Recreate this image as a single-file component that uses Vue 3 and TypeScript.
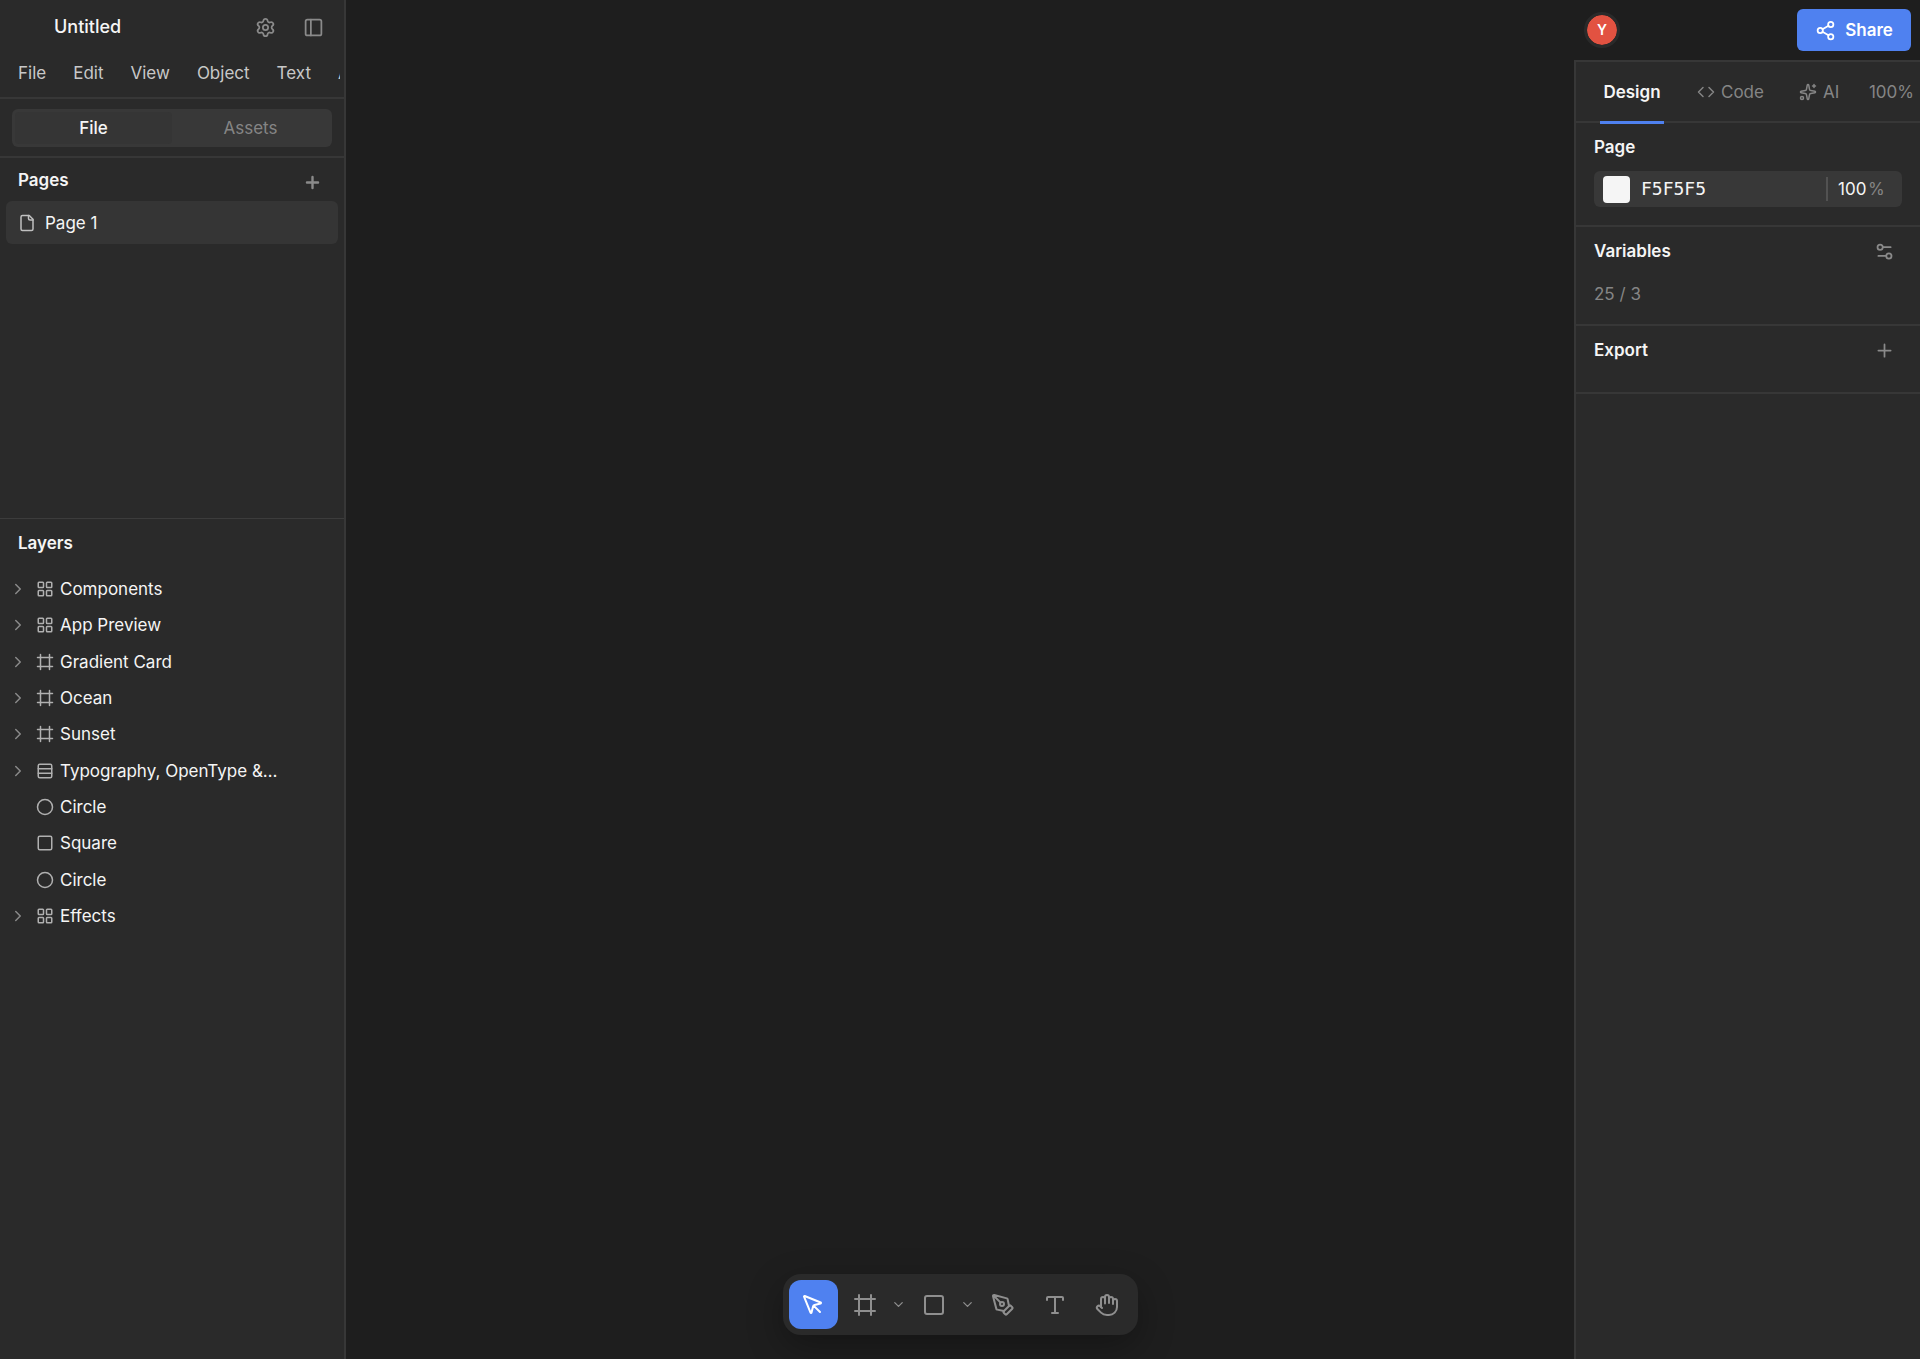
<script setup lang="ts">
import { ref } from 'vue'

type IconName = keyof typeof icons

const icons = {
  settings:
    '<path d="M9.671 4.136a2.34 2.34 0 0 1 4.659 0 2.34 2.34 0 0 0 3.319 1.915 2.34 2.34 0 0 1 2.33 4.033 2.34 2.34 0 0 0 0 3.831 2.34 2.34 0 0 1-2.33 4.033 2.34 2.34 0 0 0-3.319 1.915 2.34 2.34 0 0 1-4.659 0 2.34 2.34 0 0 0-3.32-1.915 2.34 2.34 0 0 1-2.33-4.033 2.34 2.34 0 0 0 0-3.831A2.34 2.34 0 0 1 6.35 6.051a2.34 2.34 0 0 0 3.319-1.915"/><circle cx="12" cy="12" r="3"/>',
  panel: '<rect x="3" y="3" width="18" height="18" rx="2"/><path d="M9 3v18"/>',
  plus: '<path d="M5 12h14M12 5v14"/>',
  file: '<path d="M15 2H6a2 2 0 0 0-2 2v16a2 2 0 0 0 2 2h12a2 2 0 0 0 2-2V7Z"/><path d="M14 2v4a2 2 0 0 0 2 2h4"/>',
  right: '<path d="m9 18 6-6-6-6"/>',
  down: '<path d="m6 9 6 6 6-6"/>',
  group:
    '<rect x="3" y="3" width="7" height="7" rx="1"/><rect x="14" y="3" width="7" height="7" rx="1"/><rect x="14" y="14" width="7" height="7" rx="1"/><rect x="3" y="14" width="7" height="7" rx="1"/>',
  frame: '<path d="M22 6H2M22 18H2M6 2v20M18 2v20"/>',
  rows: '<rect x="3" y="3" width="18" height="18" rx="2"/><path d="M21 9H3M21 15H3"/>',
  circle: '<circle cx="12" cy="12" r="10"/>',
  square: '<rect x="3" y="3" width="18" height="18" rx="2"/>',
  share:
    '<circle cx="18" cy="5" r="3"/><circle cx="6" cy="12" r="3"/><circle cx="18" cy="19" r="3"/><path d="m8.59 13.51 6.83 3.98M15.41 6.51l-6.82 3.98"/>',
  code: '<path d="m16 18 6-6-6-6M8 6l-6 6 6 6"/>',
  sparkles:
    '<path d="M11.017 2.814a1 1 0 0 1 1.966 0l1.051 5.558a2 2 0 0 0 1.594 1.594l5.558 1.051a1 1 0 0 1 0 1.966l-5.558 1.051a2 2 0 0 0-1.594 1.594l-1.051 5.558a1 1 0 0 1-1.966 0l-1.051-5.558a2 2 0 0 0-1.594-1.594l-5.558-1.051a1 1 0 0 1 0-1.966l5.558-1.051a2 2 0 0 0 1.594-1.594zM20 2v4M22 4h-4"/><circle cx="4" cy="20" r="2"/>',
  sliders: '<path d="M14 17H5M19 7h-9"/><circle cx="17" cy="17" r="3"/><circle cx="7" cy="7" r="3"/>',
  pointer:
    '<path d="M12.586 12.586 19 19M3.688 3.037a.497.497 0 0 0-.651.651l6.5 15.999a.501.501 0 0 0 .947-.062l1.569-6.083a2 2 0 0 1 1.448-1.479l6.124-1.579a.5.5 0 0 0 .063-.947z"/>',
  pen: '<path d="M15.707 21.293a1 1 0 0 1-1.414 0l-1.586-1.586a1 1 0 0 1 0-1.414l5.586-5.586a1 1 0 0 1 1.414 0l1.586 1.586a1 1 0 0 1 0 1.414z"/><path d="m18 13-1.375-6.874a1 1 0 0 0-.746-.776L3.235 2.028a1 1 0 0 0-1.207 1.207L5.35 15.879a1 1 0 0 0 .776.746L13 18M2.3 2.3l7.286 7.286"/><circle cx="11" cy="11" r="2"/>',
  type: '<path d="M12 4v16M4 7V5a1 1 0 0 1 1-1h14a1 1 0 0 1 1 1v2M9 20h6"/>',
  hand: '<path d="M18 11V6a2 2 0 0 0-2-2a2 2 0 0 0-2 2M14 10V4a2 2 0 0 0-2-2a2 2 0 0 0-2 2v2M10 10.5V6a2 2 0 0 0-2-2a2 2 0 0 0-2 2v8"/><path d="M18 8a2 2 0 1 1 4 0v6a8 8 0 0 1-8 8h-2c-2.8 0-4.5-.86-5.99-2.34l-3.6-3.6a2 2 0 0 1 2.83-2.82L7 15"/>',
}

const menus = ['File', 'Edit', 'View', 'Object', 'Text', 'Arrange']

const layers: { name: string; icon: IconName; open?: boolean }[] = [
  { name: 'Components', icon: 'group', open: true },
  { name: 'App Preview', icon: 'group', open: true },
  { name: 'Gradient Card', icon: 'frame', open: true },
  { name: 'Ocean', icon: 'frame', open: true },
  { name: 'Sunset', icon: 'frame', open: true },
  { name: 'Typography, OpenType &…', icon: 'rows', open: true },
  { name: 'Circle', icon: 'circle' },
  { name: 'Square', icon: 'square' },
  { name: 'Circle', icon: 'circle' },
  { name: 'Effects', icon: 'group', open: true },
]

const tools: { label: string; icon: IconName; more?: boolean }[] = [
  { label: 'Move', icon: 'pointer' },
  { label: 'Frame', icon: 'frame', more: true },
  { label: 'Rectangle', icon: 'square', more: true },
  { label: 'Pen', icon: 'pen' },
  { label: 'Type', icon: 'type' },
  { label: 'Pan', icon: 'hand' },
]

const activeTool = ref('Move')
const pageColor = ref('F5F5F5')
const pageOpacity = ref('100')
</script>

<template>
  <div class="editor">
    <aside class="left">
      <header class="title-bar">
        <h1>Untitled</h1>
        <button class="icon-btn" aria-label="Settings"><svg class="ic md" viewBox="0 0 24 24" v-html="icons.settings" /></button>
        <button class="icon-btn" aria-label="Toggle sidebar"><svg class="ic md" viewBox="0 0 24 24" v-html="icons.panel" /></button>
      </header>
      <nav class="menus">
        <button v-for="m in menus" :key="m">{{ m }}</button>
      </nav>
      <div class="switch-wrap">
        <div class="switch">
          <button class="on">File</button>
          <button>Assets</button>
        </div>
      </div>
      <section class="pages">
        <div class="pages-head">
          <h2>Pages</h2>
          <button class="icon-btn" aria-label="Add page"><svg class="ic add" viewBox="0 0 24 24" v-html="icons.plus" /></button>
        </div>
        <button class="page"><svg class="ic sm" viewBox="0 0 24 24" v-html="icons.file" />Page 1</button>
      </section>
      <section class="layers">
        <h2>Layers</h2>
        <ul>
          <li v-for="(l, i) in layers" :key="i">
            <svg class="ic sm arrow" viewBox="0 0 24 24" v-html="l.open ? icons.right : ''" />
            <svg class="ic sm kind" viewBox="0 0 24 24" v-html="icons[l.icon]" />
            <span>{{ l.name }}</span>
          </li>
        </ul>
      </section>
    </aside>

    <main class="canvas">
      <div class="toolbar">
        <template v-for="t in tools" :key="t.label">
          <button class="tool" :class="{ active: activeTool === t.label }" :aria-label="t.label" @click="activeTool = t.label">
            <svg class="ic lg" viewBox="0 0 24 24" v-html="icons[t.icon]" />
          </button>
          <button v-if="t.more" class="more" :aria-label="`${t.label} options`">
            <svg class="ic xs" viewBox="0 0 24 24" v-html="icons.down" />
          </button>
        </template>
      </div>
    </main>

    <aside class="right">
      <header class="top">
        <span class="avatar">Y</span>
        <button class="share"><svg class="ic md" viewBox="0 0 24 24" v-html="icons.share" />Share</button>
      </header>
      <div class="inspector">
        <nav class="tabs">
          <button class="current">Design</button>
          <button class="code"><svg class="ic sm" viewBox="0 0 24 24" v-html="icons.code" />Code</button>
          <button class="ai"><svg class="ic sm" viewBox="0 0 24 24" v-html="icons.sparkles" />AI</button>
          <button class="zoom">100%</button>
        </nav>
        <section class="page-fill">
          <h2>Page</h2>
          <div class="fill">
            <button class="swatch" aria-label="Page color"></button>
            <input v-model="pageColor" class="hex" aria-label="Hex color" />
            <label class="opacity"><input v-model="pageOpacity" aria-label="Opacity" /><span>%</span></label>
          </div>
        </section>
        <section class="variables">
          <div class="head">
            <h2>Variables</h2>
            <button class="icon-btn" aria-label="Edit variables"><svg class="ic md" viewBox="0 0 24 24" v-html="icons.sliders" /></button>
          </div>
          <p>25 / 3</p>
        </section>
        <section class="export">
          <div class="head">
            <h2>Export</h2>
            <button class="icon-btn" aria-label="Add export"><svg class="ic md" viewBox="0 0 24 24" v-html="icons.plus" /></button>
          </div>
        </section>
      </div>
    </aside>
  </div>
</template>

<style>
body {
  background: #1e1e1e;
}
</style>

<style scoped>
* {
  box-sizing: border-box;
}
.editor {
  display: flex;
  height: 100vh;
  overflow: hidden;
  background: #1e1e1e;
  color: #f5f5f5;
  font: 400 17px/24px Inter, "Liberation Sans", sans-serif;
}
button,
input {
  margin: 0;
  padding: 0;
  border: 0;
  background: none;
  color: inherit;
  font: inherit;
}
h1,
h2,
p,
ul {
  margin: 0;
  padding: 0;
  font: inherit;
}
h2 {
  font-weight: 600;
}
.ic {
  flex: none;
  display: block;
  fill: none;
  stroke: currentColor;
  stroke-width: 2;
  stroke-linecap: round;
  stroke-linejoin: round;
}
.xs { width: 15px; height: 15px; }
.sm { width: 18px; height: 18px; }
.md { width: 21px; height: 21px; }
.lg { width: 24px; height: 24px; }
.add { width: 19px; height: 19px; stroke-width: 3; }
.icon-btn {
  display: grid;
  place-items: center;
  width: 36px;
  height: 36px;
  color: #8a8a8a;
}

.left {
  display: flex;
  flex-direction: column;
  flex: none;
  width: 346px;
  border-right: 2px solid #373737;
  background: #2a2a2a;
}
.title-bar {
  display: flex;
  align-items: center;
  gap: 12px;
  height: 54px;
  padding: 0 13px 0 54px;
}
.title-bar h1 {
  flex: 1;
  font-size: 18px;
  font-weight: 500;
}
.menus {
  display: flex;
  gap: 3px;
  height: 43px;
  margin: 0 4px 0 6px;
  padding-bottom: 6px;
  overflow: hidden;
}
.menus button {
  flex: none;
  padding: 0 12px;
  color: #c8c8c8;
}
.switch-wrap {
  padding: 10px 12px 9px;
  border-top: 2px solid #373737;
  border-bottom: 2px solid #373737;
}
.switch {
  display: flex;
  height: 38px;
  padding: 3px;
  border-radius: 6px;
  background: #383838;
  color: #858585;
}
.switch button {
  flex: 1;
  border-radius: 4px;
}
.switch .on {
  background: #353535;
  color: #f5f5f5;
  font-weight: 500;
}
.pages {
  height: 360px;
  padding: 0 6px;
}
.pages-head {
  display: flex;
  justify-content: space-between;
  align-items: flex-end;
  height: 43px;
  padding: 0 8px 0 12px;
}
.pages-head h2 {
  align-self: center;
}
.pages-head .icon-btn {
  height: 38px;
}
.page {
  display: flex;
  align-items: center;
  gap: 9px;
  width: 100%;
  height: 43px;
  padding-left: 12px;
  border-radius: 6px;
  background: #353535;
}
.page svg {
  color: #c0c0c0;
}
.layers {
  border-top: 1px solid #3c3c3c;
}
.layers h2 {
  padding: 12px 18px;
}
.layers ul {
  display: grid;
  grid-template-rows: repeat(10, 1fr);
  height: 363px;
  margin-top: 4px;
  padding: 0 60px 0 9px;
  list-style: none;
}
.layers li {
  display: flex;
  align-items: center;
  gap: 6px;
  white-space: nowrap;
}
.arrow {
  margin-right: 3px;
  color: #8a8a8a;
}
.kind {
  color: #b0b0b0;
}

.canvas {
  display: flex;
  flex: 1;
  align-items: flex-end;
  justify-content: center;
  min-width: 0;
  padding-bottom: 24px;
}
.toolbar {
  display: flex;
  align-items: center;
  gap: 3px;
  height: 61px;
  padding: 6px;
  border-radius: 18px;
  background: #2a2a2a;
  box-shadow: 0 12px 36px rgba(0, 0, 0, 0.3);
  color: #8f8f8f;
}
.tool {
  display: grid;
  place-items: center;
  width: 49px;
  height: 49px;
  border-radius: 12px;
}
.tool.active {
  background: #4f81f0;
  color: #fff;
}
.more {
  display: flex;
  align-items: center;
  justify-content: center;
  width: 12px;
  height: 48px;
  margin-right: 2px;
}

.right {
  display: flex;
  flex-direction: column;
  flex: none;
  width: 346px;
}
.top {
  display: flex;
  align-items: center;
  justify-content: space-between;
  height: 60px;
  padding: 0 9px 0 10px;
}
.avatar {
  display: grid;
  place-items: center;
  width: 36px;
  height: 36px;
  border: 3px solid #2a2a2a;
  border-radius: 50%;
  background: #e25241;
  background-clip: padding-box;
  color: #fff;
  font-size: 14px;
  font-weight: 600;
}
.share {
  display: flex;
  align-items: center;
  justify-content: center;
  gap: 9px;
  width: 114px;
  height: 42px;
  border-radius: 6px;
  background: #4f81f0;
  color: #fff;
  font-weight: 600;
}
.inspector {
  flex: 1;
  border-top: 2px solid #373737;
  border-left: 2px solid #373737;
  background: #2a2a2a;
}
.tabs {
  display: flex;
  height: 61px;
  padding: 0 6px 0 24px;
  border-bottom: 2px solid #373737;
  color: #858585;
}
.tabs button {
  display: flex;
  align-items: center;
  gap: 6px;
}
.tabs .current {
  justify-content: center;
  width: 64px;
  height: 62px;
  border-bottom: 3px solid #4f81f0;
  color: #f5f5f5;
  font-weight: 600;
}
.tabs .code {
  margin-left: 33px;
}
.tabs .ai {
  margin-left: 35px;
}
.tabs .zoom {
  margin-left: auto;
}
.inspector section {
  padding: 0 18px;
  border-bottom: 2px solid #373737;
}
.page-fill {
  height: 104px;
}
.page-fill h2 {
  padding: 12px 0;
}
.fill {
  display: flex;
  align-items: center;
  height: 36px;
  padding: 0 9px;
  border-radius: 6px;
  background: #383838;
}
.swatch {
  flex: none;
  width: 27px;
  height: 27px;
  border-radius: 4px;
  background: #f5f5f5;
}
.hex {
  flex: 1;
  min-width: 0;
  padding-left: 11px;
  font: 18px/24px "DejaVu Sans Mono", monospace;
}
.opacity {
  display: flex;
  align-items: center;
  width: 67px;
  height: 24px;
  padding-left: 10px;
  border-left: 2px solid #525252;
}
.opacity input {
  width: 30px;
}
.opacity span {
  color: #858585;
}
.head {
  display: flex;
  align-items: center;
  justify-content: space-between;
  height: 48px;
}
.variables {
  height: 99px;
}
.variables p {
  margin-top: 7px;
  color: #858585;
}
.export {
  height: 68px;
}
</style>
